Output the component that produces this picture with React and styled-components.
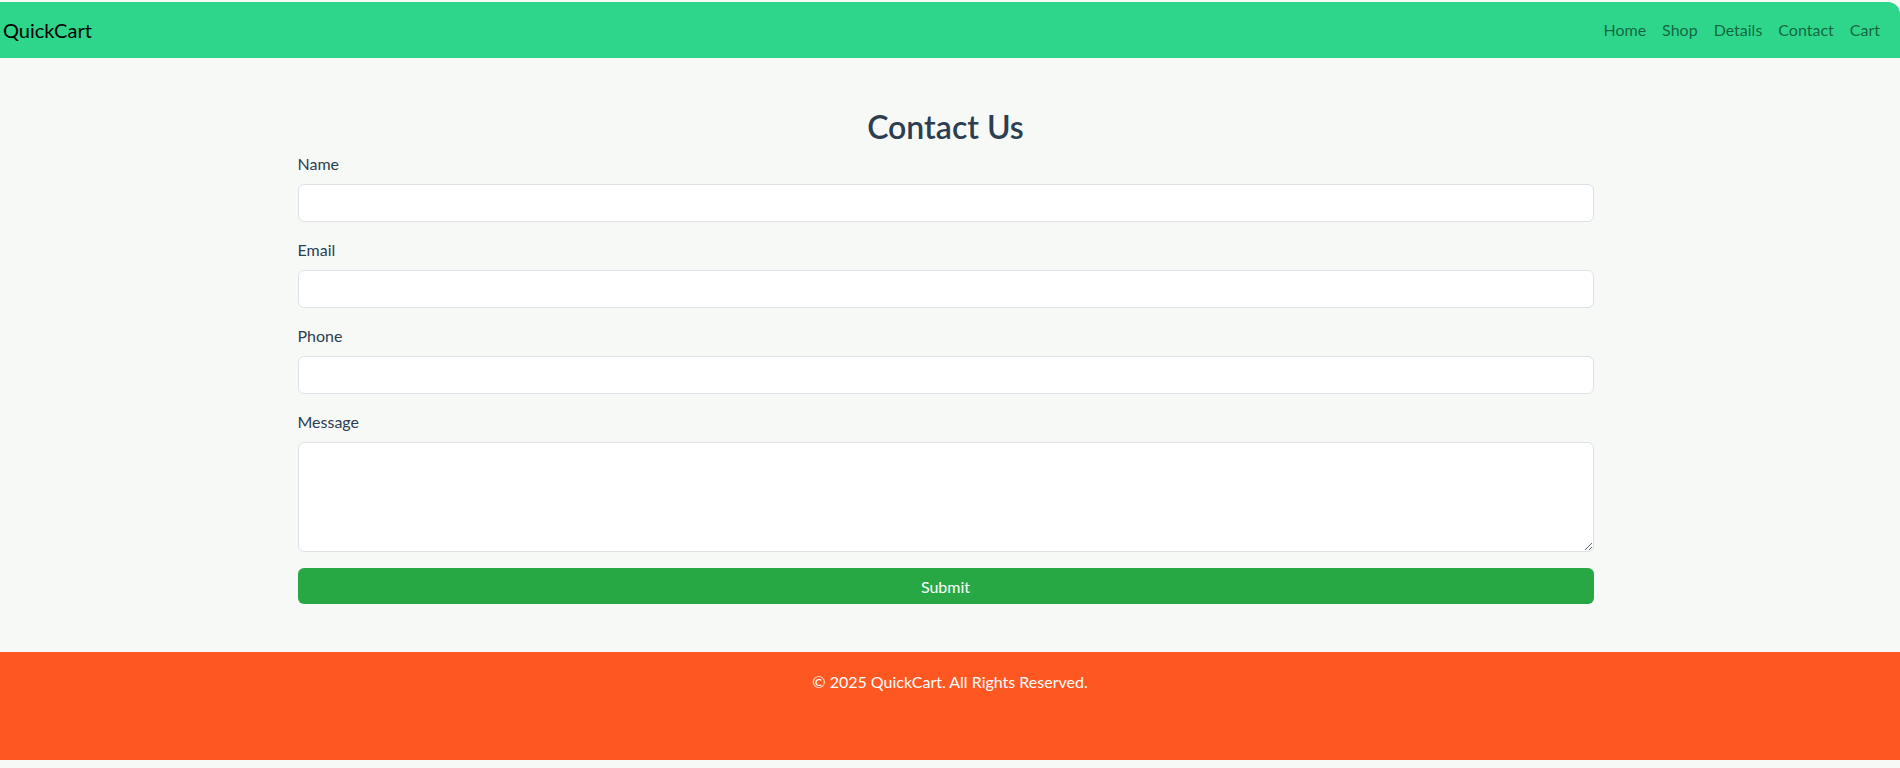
import React from 'react';
import styled, { createGlobalStyle } from 'styled-components';

const GlobalStyle = createGlobalStyle`
  html, body {
    margin: 0;
    padding: 0;
    background: #f7f9f7;
    font-family: Lato, "Noto Sans", sans-serif;
  }
  * { box-sizing: border-box; }
`

const Page = styled.div`
  display: flex;
  flex-direction: column;
  padding-top: 2px;
`

const Navbar = styled.nav`
  height: 56px;
  background: #2dd68a;
  border-top-right-radius: 12px;
  display: flex;
  align-items: center;
  justify-content: space-between;
  padding: 0 12px 0 3px;
`

const Brand = styled.a`
  font-size: 20px;
  line-height: 30px;
  color: #000;
  text-decoration: none;
`

const NavList = styled.ul`
  display: flex;
  list-style: none;
  margin: 0;
  padding: 0;
`

const NavLink = styled.a`
  display: block;
  padding: 0 8px;
  font-size: 16px;
  line-height: 24px;
  color: rgba(0, 0, 0, 0.55);
  text-decoration: none;
`

const Main = styled.main`
  padding: 50px 9px 48px 0;
`

const Container = styled.div`
  width: 1296px;
  margin: 0 auto;
`

const Title = styled.h2`
  margin: 0 0 6px;
  text-align: center;
  font-size: 32px;
  line-height: 1.2;
  font-weight: 600;
  color: #2c3e50;
`

const Field = styled.div`
  margin-bottom: 16px;
`

const Label = styled.label`
  display: block;
  margin-bottom: 8px;
  font-size: 16px;
  line-height: 24px;
  color: #2c3e50;
`

const Input = styled.input`
  display: block;
  width: 100%;
  height: 38px;
  padding: 6px 12px;
  font-size: 16px;
  font-family: inherit;
  background: #fff;
  border: 1px solid #dee2e6;
  border-radius: 6px;
  outline: none;
`

const TextArea = styled.textarea`
  display: block;
  width: 100%;
  height: 110px;
  padding: 6px 12px;
  font-size: 16px;
  font-family: inherit;
  background: #fff;
  border: 1px solid #dee2e6;
  border-radius: 6px;
  outline: none;
`

const SubmitButton = styled.button`
  display: block;
  width: 100%;
  height: 36px;
  border: none;
  border-radius: 6px;
  background: #28a745;
  color: #fff;
  font-family: inherit;
  font-size: 16px;
  cursor: pointer;
`

const Footer = styled.footer`
  height: 108px;
  background: #ff5722;
  color: #fff;
  text-align: center;
  padding-top: 18px;
  font-size: 16px;
  line-height: 24px;
`

const fields = [
  { label: 'Name', type: 'text' },
  { label: 'Email', type: 'email' },
  { label: 'Phone', type: 'tel' },
];

export default function App() {
  return (
    <>
      <GlobalStyle />
      <Page>
        <Navbar>
          <Brand href="#">QuickCart</Brand>
          <NavList>
            {['Home', 'Shop', 'Details', 'Contact', 'Cart'].map((item) => (
              <li key={item}><NavLink href="#">{item}</NavLink></li>
            ))}
          </NavList>
        </Navbar>
        <Main>
          <Container>
            <Title>Contact Us</Title>
            <form onSubmit={(e) => e.preventDefault()}>
              {fields.map((f) => (
                <Field key={f.label}>
                  <Label>{f.label}</Label>
                  <Input type={f.type} />
                </Field>
              ))}
              <Field>
                <Label>Message</Label>
                <TextArea rows={4} />
              </Field>
              <SubmitButton type="submit">Submit</SubmitButton>
            </form>
          </Container>
        </Main>
        <Footer>© 2025 QuickCart. All Rights Reserved.</Footer>
      </Page>
    </>
  );
}
